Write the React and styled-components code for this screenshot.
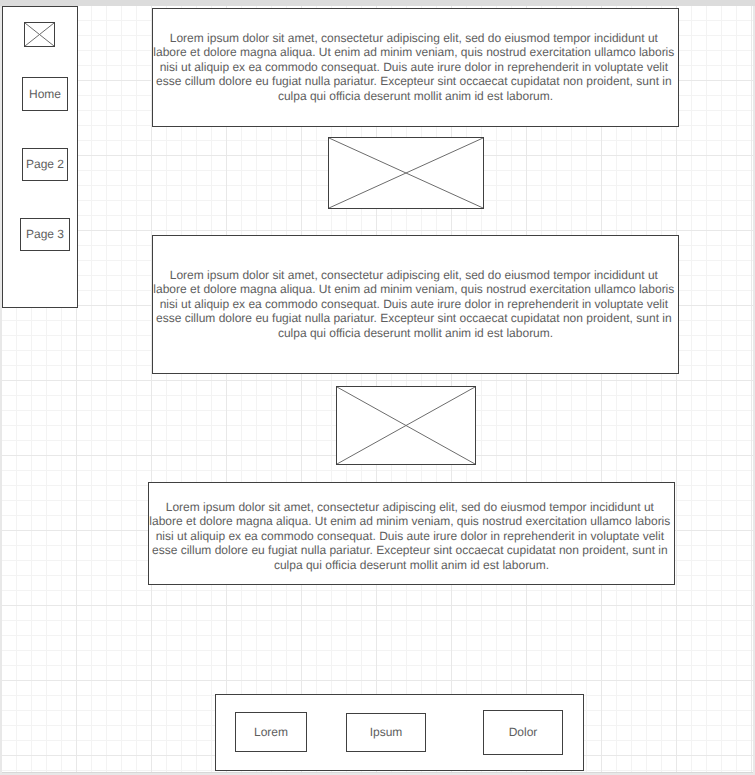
import React from "react";
import styled, { createGlobalStyle } from "styled-components";

const ink = "#404040";

const GlobalStyle = createGlobalStyle`
  *, *::before, *::after { box-sizing: border-box; }
  body {
    margin: 0;
    background: #e8e8e8;
    color: #5e5e5e;
    font: 12px/1.2 "Liberation Sans", Arial, sans-serif;
    text-rendering: geometricPrecision;
  }
`;

const Page = styled.div`
  display: flex;
  flex-direction: column;
  min-height: 100vh;
  padding: 0 2px 2px;
`;

const TopBar = styled.div`
  height: 6px;
  margin: 0 -2px;
  background: #dcdcdc;
`;

const Canvas = styled.div`
  flex: 1;
  display: flex;
  align-items: flex-start;
  border-bottom: 1px solid #d8d8d8;
  background-color: #fff;
  background-image:
    linear-gradient(to right, #e8e8e8 1px, transparent 1px),
    linear-gradient(to bottom, #e8e8e8 1px, transparent 1px),
    linear-gradient(to right, #f3f3f3 1px, transparent 1px),
    linear-gradient(to bottom, #f3f3f3 1px, transparent 1px);
  background-size: 75px 75px, 75px 75px, 15px 15px, 15px 15px;
  background-position: -1px -1px;
`;

const Sidebar = styled.aside`
  flex: none;
  display: flex;
  flex-direction: column;
  align-items: center;
  width: 76px;
  padding: 15px 1px 56px 0;
  border: 1px solid ${ink};
  background: #fff;
`;

const Nav = styled.nav`
  display: flex;
  flex-direction: column;
  align-items: center;
  gap: 37px;
  margin-top: 30px;
  padding-left: 11px;
`;

const BoxButton = styled.button`
  width: ${(p) => p.$width}px;
  height: ${(p) => p.$height}px;
  padding: 0;
  border: 1px solid ${ink};
  background: #fff;
  color: inherit;
  font: inherit;
  text-rendering: inherit;
  white-space: nowrap;
  cursor: pointer;
`;

const Main = styled.div`
  flex: 1;
  display: flex;
  flex-direction: column;
  min-width: 0;
  padding: 2px 74px 1px 70px;
`;

const Panel = styled.section`
  display: flex;
  align-items: center;
  justify-content: center;
  min-height: ${(p) => p.$height}px;
  margin: ${(p) => (p.$shifted ? "0 4px 0 0" : "0 0 0 4px")};
  padding: ${(p) => (p.$shifted ? "5px 0 0" : "0 0 1px")};
  border: 1px solid ${ink};
  background: #fff;
  text-align: center;
`;

const Copy = styled.p`
  margin: 0;
  white-space: break-spaces;
`;

const Figure = styled.div`
  display: flex;
  justify-content: center;
  padding: ${(p) => p.$top}px 15px ${(p) => p.$bottom}px 0;
`;

const Crossed = styled.svg`
  display: block;
  width: ${(p) => p.$width}px;
  height: ${(p) => p.$height}px;
  border: 1px solid ${ink};
  background: #fff;
`;

const Footer = styled.footer`
  display: flex;
  align-items: center;
  justify-content: space-between;
  height: 77px;
  margin: 109px 95px 0 67px;
  padding: 0 20px 0 19px;
  border: 1px solid ${ink};
  background: #fff;
`;

const FooterGroup = styled.div`
  display: flex;
  align-items: flex-end;
  gap: 39px;
  padding-bottom: 1px;
`;

const LOREM =
  "Lorem ipsum dolor sit amet, consectetur adipiscing elit, sed do eiusmod tempor incididunt ut labore et dolore magna aliqua. Ut enim ad minim veniam, quis nostrud exercitation ullamco laboris nisi ut aliquip ex ea commodo consequat. Duis aute irure dolor in reprehenderit in voluptate velit esse cillum dolore eu fugiat nulla pariatur. Excepteur sint occaecat cupidatat non proident, sunt in culpa qui officia deserunt mollit anim id est laborum.";

function Placeholder({ width, height, label }) {
  const w = width - 2;
  const h = height - 2;
  return (
    <Crossed
      $width={width}
      $height={height}
      viewBox={`0 0 ${w} ${h}`}
      role="img"
      aria-label={label}
    >
      <path d={`M0 0L${w} ${h}M0 ${h}L${w} 0`} stroke="#6c6c6c" fill="none" />
    </Crossed>
  );
}

function TextPanel({ height, shifted }) {
  return (
    <Panel $height={height} $shifted={shifted}>
      <Copy>{LOREM}</Copy>
    </Panel>
  );
}

export default function App() {
  return (
    <>
      <GlobalStyle />
      <Page>
        <TopBar />
        <Canvas>
          <Sidebar>
            <Placeholder width={31} height={25} label="Logo" />
            <Nav>
              <BoxButton $width={46} $height={34}>Home</BoxButton>
              <BoxButton $width={46} $height={33}>Page 2</BoxButton>
              <BoxButton $width={50} $height={33}>Page 3</BoxButton>
            </Nav>
          </Sidebar>
          <Main>
            <TextPanel height={119} />
            <Figure $top={10} $bottom={26}>
              <Placeholder width={156} height={72} label="Image" />
            </Figure>
            <TextPanel height={139} />
            <Figure $top={12} $bottom={17}>
              <Placeholder width={140} height={79} label="Image" />
            </Figure>
            <TextPanel height={103} shifted />
            <Footer>
              <FooterGroup>
                <BoxButton $width={72} $height={40}>Lorem</BoxButton>
                <BoxButton $width={80} $height={39}>Ipsum</BoxButton>
              </FooterGroup>
              <BoxButton $width={80} $height={45}>Dolor</BoxButton>
            </Footer>
          </Main>
        </Canvas>
      </Page>
    </>
  );
}
